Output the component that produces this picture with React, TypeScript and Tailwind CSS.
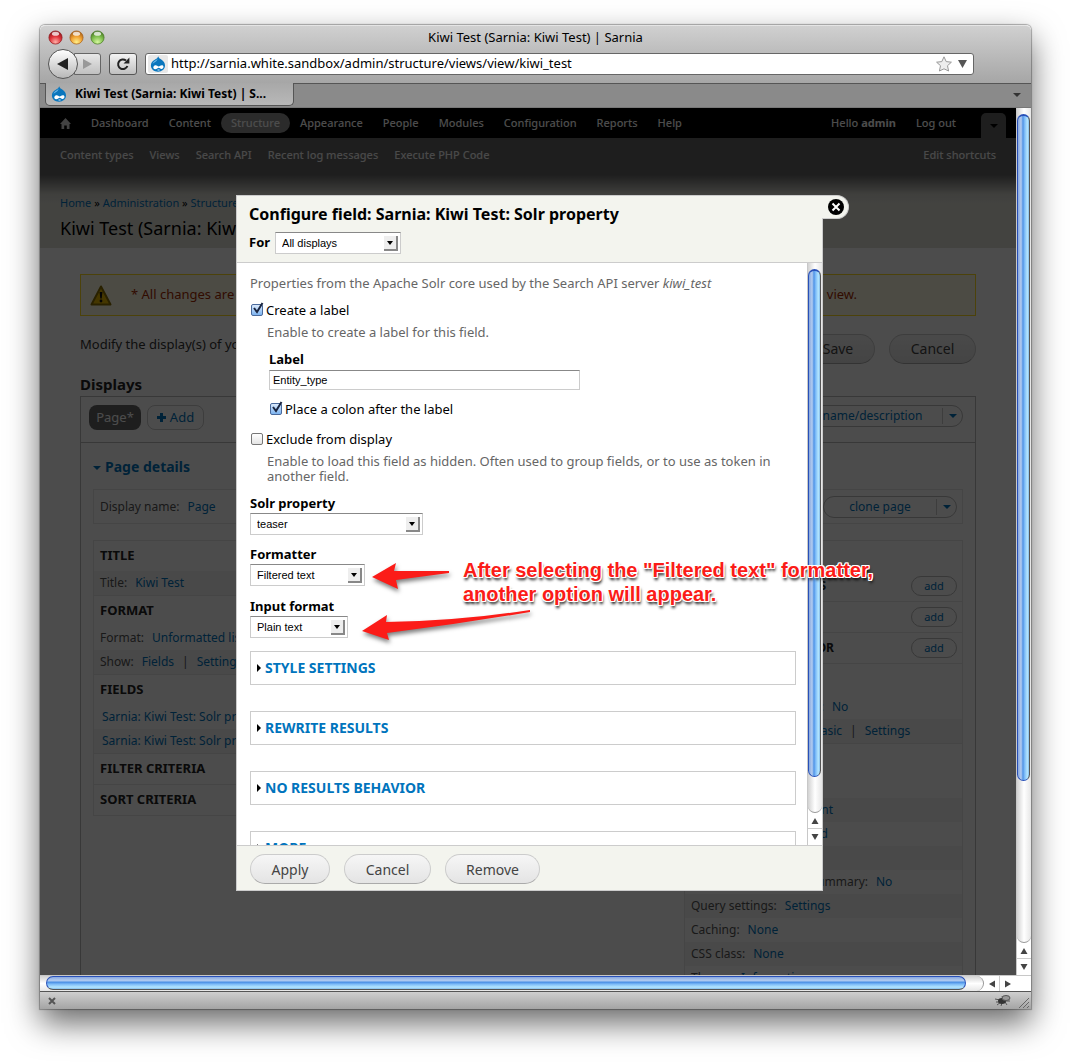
import React, { useId } from "react";

const UI = "font-['Noto_Sans','Open_Sans',sans-serif]";
const ARIAL = "font-['Liberation_Sans',Arial,sans-serif]";

/* ---------- drawings ---------- */

function DrupalIcon() {
  return (
    <svg width="16" height="16" viewBox="0 0 16 16" aria-hidden="true" className="shrink-0">
      <path d="M8.2 0.3C8.7 2.2 10.3 2.9 11.6 3.8C13.7 5.2 15 7.2 15 9.6C15 13.2 12 15.7 8 15.7C4 15.7 0.9 13.2 0.9 9.5C0.9 6.7 2.6 5.1 4.8 3.8C6.3 2.9 7.6 2.2 8.2 0.3Z" fill="#0a76bd" />
      <path d="M7.6 2.6C6.6 4.4 3.4 4.9 2.6 8C4.4 6 7.2 5.9 7.6 2.6Z" fill="#6ab5e6" />
      <path d="M4.2 9.7C5.9 8.5 7.3 9.6 8.6 10.6C10 9.7 11.6 8.6 12.9 9.6C14.3 10.9 13 13.3 11.4 13C10.2 12.8 9.7 11.9 8.7 11.8C7.6 12 6.9 13.3 5 13.2C3 13 2.7 10.8 4.2 9.7Z" fill="#fff" />
      <path d="M6.8 14C7.8 13.3 9.3 13.3 10.3 14C9.3 14.6 7.8 14.6 6.8 14Z" fill="#fff" />
    </svg>
  );
}

function Light({ edge, mid, glow }: { edge: string; mid: string; glow: string }) {
  const id = useId();
  return (
    <svg width="15" height="15" viewBox="0 0 15 15" aria-hidden="true">
      <defs>
        <radialGradient id={id} cx="0.5" cy="0.85" r="0.8">
          <stop offset="0" stopColor={glow} />
          <stop offset="0.55" stopColor={mid} />
          <stop offset="1" stopColor={edge} />
        </radialGradient>
      </defs>
      <circle cx="7.5" cy="7.5" r="6.6" fill={`url(#${id})`} stroke={edge} strokeOpacity="0.7" />
      <ellipse cx="7.5" cy="3.8" rx="3.6" ry="2" fill="#fff" opacity="0.75" />
    </svg>
  );
}

function Tri({ dir, className }: { dir: "up" | "down" | "left" | "right"; className?: string }) {
  const d = {
    up: "M4 1L7.5 7H0.5Z",
    down: "M4 7L7.5 1H0.5Z",
    left: "M1 4L7 0.5V7.5Z",
    right: "M7 4L1 0.5V7.5Z",
  }[dir];
  return (
    <svg width="8" height="8" viewBox="0 0 8 8" aria-hidden="true" className={className}>
      <path d={d} fill="currentColor" />
    </svg>
  );
}

function Caret({ className }: { className?: string }) {
  return (
    <svg width="8" height="4" viewBox="0 0 8 4" aria-hidden="true" className={className}>
      <path d="M0 0H8L4 4Z" fill="currentColor" />
    </svg>
  );
}

/* ---------- scroll bars ---------- */

function VScroll({ thumb }: { thumb: string }) {
  return (
    <div className="flex w-[15px] shrink-0 flex-col border-l border-[#c8c8c8] bg-white text-[#444]">
      <div className="flex min-h-0 flex-1 flex-col rounded-b-lg border-b border-[#999] bg-gradient-to-r from-[#d2d2d2] via-white to-[#e6e6e6] pt-1.5">
        <div
          className={`${thumb} w-[13px] rounded-full border border-t-2 border-[#2850b8] border-r-[#555] bg-[linear-gradient(90deg,#86a6de_0%,#b4ccf0_28%,#4f93e6_45%,#7dbbf8_60%,#b4e6ff_85%,#86bcea_100%)]`}
        />
      </div>
      <button type="button" aria-label="Scroll up" className="flex h-4 items-center justify-center border-b border-[#ccc]">
        <Tri dir="up" />
      </button>
      <button type="button" aria-label="Scroll down" className="flex h-4 items-center justify-center">
        <Tri dir="down" />
      </button>
    </div>
  );
}

function HScroll() {
  return (
    <div className="flex h-4 shrink-0 border-t border-[#c8c8c8] bg-white text-[#444]">
      <div className="flex min-w-0 flex-1 rounded-r-lg border-r border-[#999] bg-gradient-to-b from-[#d2d2d2] via-white to-[#e6e6e6] pl-1.5">
        <div className="mr-[17px] h-[14px] flex-1 rounded-full border border-[#2850b8] border-b-[#555] bg-[linear-gradient(180deg,#86a6de_0%,#b4ccf0_28%,#4f93e6_45%,#7dbbf8_60%,#b4e6ff_85%,#86bcea_100%)]" />
      </div>
      <button type="button" aria-label="Scroll left" className="flex w-4 items-center justify-center border-r border-[#ccc]">
        <Tri dir="left" />
      </button>
      <button type="button" aria-label="Scroll right" className="flex w-4 items-center justify-center">
        <Tri dir="right" />
      </button>
      <div className="w-[15px]" />
    </div>
  );
}

/* ---------- browser chrome ---------- */

function Chrome() {
  return (
    <header className="shrink-0 text-[13px] text-black">
      <div className="rounded-t-[5px] border-t border-white/70 bg-gradient-to-b from-[#d0d0d0] to-[#a6a6a6]">
        <div className="relative flex h-[23px] items-center gap-1.5 px-2">
          <Light edge="#8e1a1e" mid="#e0333a" glow="#ffb0a8" />
          <Light edge="#a5601b" mid="#f0a030" glow="#fff08a" />
          <Light edge="#4a7a26" mid="#7fbf4d" glow="#d6f7a0" />
          <div className="absolute inset-x-20 text-center text-[13px]">Kiwi Test (Sarnia: Kiwi Test) | Sarnia</div>
        </div>
        <div className="flex h-[34px] items-center pr-[57px] pb-1 pl-2">
          <button type="button" aria-label="Back" className="z-10 flex size-[30px] shrink-0 items-center justify-center rounded-full border border-[#555] bg-gradient-to-b from-white to-[#b8b8b8]">
            <svg width="12" height="14" viewBox="0 0 12 14" aria-hidden="true"><path d="M0 7L11 1V13Z" fill="#222" /></svg>
          </button>
          <button type="button" aria-label="Forward" className="-ml-1 flex h-[22px] w-[27px] shrink-0 items-center justify-center rounded-r-[3px] border border-[#666] bg-gradient-to-b from-[#e8e8e8] to-[#c0c0c0]">
            <svg width="9" height="10" viewBox="0 0 9 10" aria-hidden="true"><path d="M9 5L0 0V10Z" fill="#999" /></svg>
          </button>
          <button type="button" aria-label="Reload" className="ml-2 flex h-[22px] w-7 shrink-0 items-center justify-center rounded-[3px] border border-[#555] bg-gradient-to-b from-[#f4f4f4] to-[#c0c0c0]">
            <svg width="14" height="14" viewBox="0 0 14 14" aria-hidden="true">
              <path d="M10 3.6A4.8 4.8 0 1 0 11.4 9" fill="none" stroke="#222" strokeWidth="2" />
              <path d="M13.4 0.6V6.4H7.6Z" fill="#222" />
            </svg>
          </button>
          <div className="ml-2 flex h-[22px] flex-1 items-center rounded-[3px] border border-[#666] bg-white pr-1.5 pl-[2px]">
            <span className="flex h-[18px] w-5 shrink-0 items-center justify-center rounded-xs bg-[#e8e8e8]"><DrupalIcon /></span>
            <input aria-label="Address" defaultValue="http://sarnia.white.sandbox/admin/structure/views/view/kiwi_test" className="min-w-0 flex-1 bg-transparent pl-[3px] text-[13px] outline-none" />
            <button type="button" aria-label="Bookmark this page" className="mr-1.5">
              <svg width="16" height="16" viewBox="0 0 16 16" aria-hidden="true">
                <path d="M8 0.8L10.2 5.6L15.4 6.2L11.5 9.7L12.6 15L8 12.8L3.4 15L4.5 9.7L0.6 6.2L5.8 5.6Z" fill="#eee" stroke="#999" />
              </svg>
            </button>
            <button type="button" aria-label="Show history">
              <svg width="9" height="8" viewBox="0 0 9 8" aria-hidden="true"><path d="M0 0H9L4.5 8Z" fill="#555" /></svg>
            </button>
          </div>
        </div>
      </div>
      <div className="flex h-[25px] items-start justify-between border-t border-b border-t-[#555] border-b-[#777] bg-[#8a8a8a] pr-2.5 pl-[5px]">
        <button type="button" className="-mt-px flex h-[23px] w-[249px] items-center gap-2 rounded-b-[5px] border border-t-0 border-[#555] bg-gradient-to-b from-[#a8a8a8] to-[#b8b8b8] pl-[5px] text-xs font-bold whitespace-nowrap">
          <DrupalIcon />
          Kiwi Test (Sarnia: Kiwi Test) | S...
        </button>
        <button type="button" aria-label="List all tabs" className="pt-[9px] text-[#333]"><Caret /></button>
      </div>
    </header>
  );
}

/* ---------- admin page behind the dialog ---------- */

const link = "text-[#0074bd]";

function Toolbar() {
  const items = ["Dashboard", "Content", "Structure", "Appearance", "People", "Modules", "Configuration", "Reports", "Help"];
  return (
    <nav className="text-[11px] font-medium text-white" aria-label="Administration">
      <div className="flex h-[30px] items-center bg-black pr-2.5 pl-5">
        <a href="#home" aria-label="Home" className="mr-2.5">
          <svg width="11" height="11" viewBox="0 0 11 11" aria-hidden="true"><path d="M5.5 0L11 6H9.5V11H6.8V7.5H4.2V11H1.5V6H0Z" fill="#ddd" /></svg>
        </a>
        {items.map((t) => (
          <a key={t} href={`#${t}`} className={t === "Structure" ? "rounded-full bg-[#909090] px-2.5 leading-5" : "px-2.5 leading-5"}>{t}</a>
        ))}
        <span className="ml-auto px-2.5">Hello <b>admin</b></span>
        <a href="#logout" className="px-2.5">Log out</a>
        <button type="button" aria-label="Toggle shortcuts" className="ml-[15px] flex h-[25px] w-[25px] items-center justify-center self-end rounded-t-[5px] bg-[#666] text-black"><Caret /></button>
      </div>
      <div className="flex h-[34px] items-center gap-4 bg-[#666] px-5 text-[#f4f4f4]">
        {["Content types", "Views", "Search API", "Recent log messages", "Execute PHP Code"].map((t) => (
          <a key={t} href={`#${t}`}>{t}</a>
        ))}
        <a href="#edit-shortcuts" className="ml-auto">Edit shortcuts</a>
      </div>
    </nav>
  );
}

function Head({ children, className = "" }: { children?: React.ReactNode; className?: string }) {
  return <h4 className={`flex h-[30px] items-center px-1.5 text-[13px] font-bold text-[#222] ${className}`}>{children}</h4>;
}

function Row({ children, odd, className = "" }: { children?: React.ReactNode; odd?: boolean; className?: string }) {
  return <div className={`flex h-6 items-center gap-2 px-1.5 whitespace-nowrap ${odd ? "bg-[#f3f3f3]" : ""} ${className}`}>{children}</div>;
}

function A({ children }: { children: React.ReactNode }) {
  return <a href="#edit" className={link}>{children}</a>;
}

function Split({ children, className = "" }: { children: React.ReactNode; className?: string }) {
  return (
    <div className={`flex h-[22px] items-center rounded-full border border-[#bbb] ${link} ${className}`}>
      <button type="button" className="flex-1 text-center">{children}</button>
      <button type="button" aria-label="More actions" className="flex h-4 w-5 items-center justify-center border-l border-[#ccc]"><Caret /></button>
    </div>
  );
}

function AddHead({ children, width = "w-[135px]" }: { children?: React.ReactNode; width?: string }) {
  return (
    <div className="flex h-[31px] items-center justify-between border-b border-[#e8e8e8] pr-[5px] pl-1.5">
      <h4 className={`${width} text-right text-xs font-bold whitespace-nowrap text-[#222]`}>{children}</h4>
      <button type="button" className={`h-5 w-[46px] rounded-full border border-[#bbb] text-[11px] ${link}`}>add</button>
    </div>
  );
}

const pill = "h-[30px] rounded-full border border-[#ccc] border-b-[#aaa] bg-gradient-to-b from-[#f6f6f6] to-[#e4e4e4] text-[14px] text-[#444]";

function AdminPage() {
  return (
    <div className="text-xs text-[#555]">
      <Toolbar />
      <div className="h-[76px] bg-[linear-gradient(180deg,#666666_0px,#666666_3px,#d4d4cc_22px,#e0e0d8_32px)] px-5 pt-[22px]">
        <p className="text-[11px] leading-[18px] whitespace-nowrap text-black">
          <A>Home</A> » <A>Administration</A> » <A>Structure</A>
        </p>
        <h1 className="text-[18px] leading-[32px] whitespace-nowrap text-black">Kiwi Test (Sarnia: Kiwi</h1>
      </div>

      <div className="px-10 pt-[26px]">
        <div className="flex h-[42px] items-center justify-between border border-[#ffdd22] bg-[#fffce5] pr-[118px] pl-[9px] text-[13px] text-[#a52a00]">
          <span className="flex items-center gap-[19px]">
            <svg width="22" height="21" viewBox="0 0 22 21" aria-hidden="true">
              <path d="M11 1.5L20.5 19.5H1.5Z" fill="#e8b800" stroke="#8a7000" strokeWidth="2" strokeLinejoin="round" />
              <path d="M9.6 7H12.4L11.7 13.5H10.3Z" fill="#111" />
              <circle cx="11" cy="16" r="1.4" fill="#111" />
            </svg>
            * All changes are
          </span>
          <span>view.</span>
        </div>

        <div className="mt-[18px] flex h-[30px] items-center">
          <p className="flex-1 pb-2 text-[13px] text-[#333]">Modify the display(s) of your</p>
          <button type="button" className={`${pill} mr-[14px] w-[74px]`}>Save</button>
          <button type="button" className={`${pill} w-[87px]`}>Cancel</button>
        </div>

        <h2 className="mt-2 text-[15px] leading-6 font-bold text-[#222]">Displays</h2>

        <div className="h-[700px] border border-[#bbb]">
          <div className="flex h-[46px] items-start justify-between border-b border-[#bbb] px-2 pt-2 pr-3">
            <div className="flex gap-1.5">
              <button type="button" className="h-[25px] w-[52px] rounded-lg bg-[#666] text-[13px] text-white">Page*</button>
              <button type="button" className={`flex h-[25px] w-[57px] items-center justify-center gap-1 rounded-lg border border-[#ccc] text-[13px] ${link}`}>
                <svg width="9" height="9" viewBox="0 0 9 9" aria-hidden="true"><path d="M3 0H6V3H9V6H6V9H3V6H0V3H3Z" fill="currentColor" /></svg>
                Add
              </button>
            </div>
            <Split className="w-[214px]">edit view name/description</Split>
          </div>

          <div className="px-3 pt-3">
            <h3 className={`flex h-[25px] items-center gap-1 text-[14px] font-bold ${link}`}><Caret />Page details</h3>
            <div className="mt-[9px] flex h-[35px] items-center justify-between border border-[#e8e8e8] pr-[5px] pl-1.5">
              <span className="flex gap-2">Display name: <A>Page</A></span>
              <Split className="w-[134px]">clone page</Split>
            </div>

            <div className="mt-4 flex justify-between">
              <section className="w-[280px] self-start border border-[#e8e8e8]">
                <div className="border-b border-[#e8e8e8]">
                  <Head>TITLE</Head>
                  <Row odd>Title: <A>Kiwi Test</A></Row>
                </div>
                <div className="border-b border-[#e8e8e8]">
                  <Head>FORMAT</Head>
                  <Row>Format: <A>Unformatted list</A></Row>
                  <Row odd>Show: <A>Fields</A> | <A>Settings</A></Row>
                </div>
                <div className="border-b border-[#e8e8e8]">
                  <Head>FIELDS</Head>
                  <Row className="pl-2"><A>Sarnia: Kiwi Test: Solr property</A></Row>
                  <Row odd className="pl-2"><A>Sarnia: Kiwi Test: Solr property</A></Row>
                </div>
                <div className="border-b border-[#e8e8e8]"><Head>FILTER CRITERIA</Head></div>
                <Head>SORT CRITERIA</Head>
              </section>

              <section className="w-[279px] border border-[#e8e8e8] pt-[30px]">
                <AddHead>FILTERS</AddHead>
                <AddHead />
                <AddHead width="w-[143px]">BEHAVIOR</AddHead>
                <div className="border-b border-[#e8e8e8] pt-[31px]">
                  <Row><span className="w-[133px] text-right">block:</span><A>No</A></Row>
                  <Row odd><span className="w-[151px] text-right"><A>Basic</A></span> | <A>Settings</A></Row>
                </div>
                <div className="pt-[54px]">
                  <Row odd><span className="w-[142px] text-right"><A>No comment</A></span></Row>
                  <Row><span className="w-[137px] text-right"><A>Enabled</A></span></Row>
                  <Row odd />
                  <Row><span className="w-[177px] text-right">attachments in summary:</span><A>No</A></Row>
                  <Row odd>Query settings: <A>Settings</A></Row>
                  <Row>Caching: <A>None</A></Row>
                  <Row odd>CSS class: <A>None</A></Row>
                  <Row>Theme: <A>Information</A></Row>
                </div>
              </section>
            </div>
          </div>
        </div>
      </div>
    </div>
  );
}

/* ---------- dialog ---------- */

function Pick({ id, value, width }: { id: string; value: string; width: string }) {
  return (
    <span className={`relative inline-flex ${width}`}>
      <select id={id} defaultValue={value} className={`h-[22px] w-full appearance-none border border-[#ccc] border-t-[#888] bg-white pl-1.5 text-[11px] text-black ${ARIAL}`}>
        <option>{value}</option>
      </select>
      <span className="pointer-events-none absolute top-1 right-[3px] flex h-[15px] w-[14px] items-center justify-center border-r-2 border-b-2 border-[#888] bg-[#eee] text-black">
        <svg width="6" height="4" viewBox="0 0 6 4" aria-hidden="true"><path d="M0 0H6L3 4Z" fill="currentColor" /></svg>
      </span>
    </span>
  );
}

function Check({ id, label, checked, className = "" }: { id: string; label: string; checked?: boolean; className?: string }) {
  return (
    <div className={`flex h-4 items-center ${className}`}>
      <span className="relative flex size-4 shrink-0 items-center">
        <input
          id={id}
          type="checkbox"
          defaultChecked={checked}
          className="ml-px size-3 appearance-none rounded-[2px] border border-[#777] bg-gradient-to-b from-white to-[#e4e4e4] checked:border-[#4a6a9c] checked:from-[#dbeafc] checked:to-[#7db4f0]"
        />
        {checked && (
          <svg width="14" height="14" viewBox="0 0 14 14" aria-hidden="true" className="pointer-events-none absolute top-0 left-0">
            <path d="M4 6L7 10L12.5 1" fill="none" stroke="#1a2540" strokeWidth="2" />
          </svg>
        )}
      </span>
      <label htmlFor={id} className="text-black">{label}</label>
    </div>
  );
}

function Fieldset({ children }: { children: React.ReactNode }) {
  return (
    <div className="mb-[26px] border border-[#ccc]">
      <button type="button" className={`flex h-8 w-full items-center gap-1 pl-1.5 text-[14px] font-bold ${link}`}>
        <svg width="4" height="8" viewBox="0 0 4 8" aria-hidden="true"><path d="M0 0L4 4L0 8Z" fill="#000" /></svg>
        {children}
      </button>
    </div>
  );
}

function Dialog() {
  return (
    <div role="dialog" aria-label="Configure field" className="absolute top-[87px] right-[193px] bottom-[84px] left-[196px] flex flex-col border border-[#ccc] bg-white text-[13px] text-[#666]">
      <div className="shrink-0 border-b border-[#ccc] bg-[#f3f4ee] px-3 pt-1.5 pb-2">
        <h2 className="mb-1.5 text-[16px] leading-6 font-bold whitespace-nowrap text-black">Configure field: Sarnia: Kiwi Test: Solr property</h2>
        <div className="flex h-[22px] items-center gap-[5px]">
          <label htmlFor="for" className="font-bold text-black">For</label>
          <Pick id="for" value="All displays" width="w-[126px]" />
        </div>
      </div>
      <button type="button" aria-label="Close" className="absolute -top-px -right-[27px] flex h-6 w-[27px] items-center rounded-r-xl border border-l-0 border-[#ccc] bg-[#f3f4ee] pl-1.5">
        <svg width="16" height="16" viewBox="0 0 16 16" aria-hidden="true">
          <circle cx="8" cy="8" r="8" fill="#000" />
          <path d="M4.5 4.5L11.5 11.5M11.5 4.5L4.5 11.5" stroke="#fff" strokeWidth="2" />
        </svg>
      </button>

      <div className="flex min-h-0 flex-1">
        <div className="min-w-0 flex-1 overflow-hidden pt-3 pr-[11px] pl-[13px] leading-4">
          <p>Properties from the Apache Solr core used by the Search API server <i>kiwi_test</i></p>
          <Check id="create" label="Create a label" checked className="mt-[11px]" />
          <div className="pl-[17px]">
            <p className="mt-1.5">Enable to create a label for this field.</p>
            <div className="pl-0.5">
              <label htmlFor="label" className="mt-[11px] block font-bold text-black">Label</label>
              <input id="label" defaultValue="Entity_type" className={`mt-[3px] mb-[11px] block h-5 w-[311px] border border-[#ccc] border-t-[#888] px-[3px] text-[11px] text-black ${ARIAL}`} />
              <Check id="colon" label="Place a colon after the label" checked />
            </div>
          </div>
          <Check id="exclude" label="Exclude from display" className="mt-[14px]" />
          <p className="mt-[7px] pl-[17px] leading-[15px]">Enable to load this field as hidden. Often used to group fields, or to use as token in another field.</p>

          <label htmlFor="solr" className="mt-[11px] mb-[2px] block font-bold text-black">Solr property</label>
          <Pick id="solr" value="teaser" width="w-[173px]" />
          <label htmlFor="formatter" className="mt-[11px] mb-[2px] block font-bold text-black">Formatter</label>
          <Pick id="formatter" value="Filtered text" width="w-[115px]" />
          <label htmlFor="input-format" className="mt-3 mb-[2px] block font-bold text-black">Input format</label>
          <Pick id="input-format" value="Plain text" width="w-[98px]" />

          <div className="mt-[13px]">
            <Fieldset>STYLE SETTINGS</Fieldset>
            <Fieldset>REWRITE RESULTS</Fieldset>
            <Fieldset>NO RESULTS BEHAVIOR</Fieldset>
            <Fieldset>MORE</Fieldset>
          </div>
        </div>
        <VScroll thumb="h-[93.5%]" />
      </div>

      <div className="flex h-[45px] shrink-0 items-center gap-[14px] border-t border-[#ccc] bg-[#f3f4ee] px-[13px] pt-0.5">
        <button type="button" className={`${pill} w-20`}>Apply</button>
        <button type="button" className={`${pill} w-[87px]`}>Cancel</button>
        <button type="button" className={`${pill} w-[95px]`}>Remove</button>
      </div>
    </div>
  );
}

/* Hand-placed callout: two arrows and a caption floating above the dialog. */
function Callout() {
  return (
    <div className="pointer-events-none absolute top-[441px] left-[320px] h-[100px] w-[530px]">
      <svg width="180" height="100" viewBox="0 0 180 100" aria-hidden="true" className="absolute top-0 left-0 drop-shadow-[1px_3px_2px_rgba(0,0,0,0.5)]">
        <path d="M12 28L36 14L34 22L89 22V24L36 31L38 40Z" fill="#fb1c18" />
        <path d="M2 82L27 66L26 73Q100 72 170 61V63Q100 75 27 84L29 91Z" fill="#fb1c18" />
      </svg>
      <p className={`absolute top-[9px] left-[103px] text-[20px] leading-6 font-bold whitespace-nowrap text-[#fb1c18] [text-shadow:1px_0_0_#fff,-1px_0_0_#fff,0_1px_0_#fff,0_-1px_0_#fff,1px_1px_0_#fff,-1px_-1px_0_#fff,1px_-1px_0_#fff,-1px_1px_0_#fff,1px_3px_3px_#000] ${ARIAL}`}>
        After selecting the "Filtered text" formatter,
        <br />
        another option will appear.
      </p>
    </div>
  );
}

export default function App() {
  return (
    <div className={`flex h-screen flex-col bg-white px-10 pt-[25px] pb-[55px] ${UI}`}>
      <div className="flex min-h-0 flex-1 flex-col rounded-t-[5px] shadow-[0_14px_32px_rgba(0,0,0,0.6),0_0_1px_1px_rgba(0,0,0,0.3)]">
        <Chrome />
        <div className="flex min-h-0 flex-1">
          <div className="relative min-w-0 flex-1 overflow-hidden bg-white">
            <AdminPage />
            <div className="absolute inset-0 bg-black/70" />
            <Dialog />
            <Callout />
          </div>
          <VScroll thumb="h-[80.5%]" />
        </div>
        <HScroll />
        <footer className="flex h-[18px] shrink-0 items-center justify-between border-t border-[#555] bg-gradient-to-b from-[#cfcfcf] to-[#a4a4a4] pl-2">
          <button type="button" aria-label="Close status bar">
            <svg width="8" height="8" viewBox="0 0 8 8" aria-hidden="true"><path d="M1 1L7 7M7 1L1 7" stroke="#555" strokeWidth="2" /></svg>
          </button>
          <svg width="38" height="16" viewBox="0 0 38 16" aria-hidden="true">
            <path d="M2 6L7 7M4 12L8 9M3 9H8M8 13L9 10M14 12L12 9M17 8L13 8M9 3L10 6" stroke="#555" />
            <ellipse cx="9" cy="8" rx="4" ry="3" fill="#333" />
            <ellipse cx="13" cy="5" rx="4" ry="2.5" fill="#999" stroke="#555" />
            <path d="M26 15L36 5M30 15L36 9M34 15L36 13" stroke="#666" strokeWidth="1" />
          </svg>
        </footer>
      </div>
    </div>
  );
}
